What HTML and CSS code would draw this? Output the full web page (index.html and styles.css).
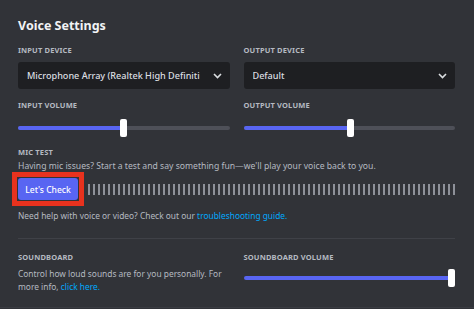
FILE: index.html
```html
<!DOCTYPE html>
<html lang="en">
<head>
    <meta charset="UTF-8">
    <meta name="viewport" content="width=device-width, initial-scale=1.0">
    <title>Voice Settings</title>
    <link rel="stylesheet" href="styles.css">
</head>
<body>
<div class="page">
    <h2 class="title">Voice Settings</h2>

    <div class="two-col devices">
        <div>
            <div class="label">Input Device</div>
            <div class="select">
                <span class="select-text">Microphone Array (Realtek High Definiti</span>
                <svg class="chev" width="9" height="6" viewBox="0 0 9 6"><path d="M1 1l3.5 3.5L8 1" fill="none" stroke="#dbdee1" stroke-width="1.6"/></svg>
            </div>
        </div>
        <div>
            <div class="label">Output Device</div>
            <div class="select">
                <span class="select-text">Default</span>
                <svg class="chev" width="9" height="6" viewBox="0 0 9 6"><path d="M1 1l3.5 3.5L8 1" fill="none" stroke="#dbdee1" stroke-width="1.6"/></svg>
            </div>
        </div>
    </div>

    <div class="two-col volumes">
        <div>
            <div class="label">Input Volume</div>
            <div class="slider">
                <div class="track"><div class="fill" style="width: 49.5%"></div></div>
                <div class="thumb" style="left: 49.5%"></div>
            </div>
        </div>
        <div>
            <div class="label">Output Volume</div>
            <div class="slider">
                <div class="track"><div class="fill" style="width: 50.2%"></div></div>
                <div class="thumb" style="left: 50.2%"></div>
            </div>
        </div>
    </div>

    <div class="mic-test">
        <div class="label">Mic Test</div>
        <p class="desc">Having mic issues? Start a test and say something fun—we'll play your voice back to you.</p>
        <div class="check-row">
            <span class="highlight"><button class="check-btn">Let's Check</button></span>
            <div class="meter"></div>
        </div>
        <p class="desc help">Need help with voice or video? Check out our <a href="#">troubleshooting guide.</a></p>
    </div>

    <div class="divider"></div>

    <div class="two-col soundboard">
        <div>
            <div class="label">Soundboard</div>
            <p class="desc sb-desc"><span>Control how loud sounds are for you personally. For</span><br><span>more info, </span><a href="#">click here.</a></p>
        </div>
        <div>
            <div class="label">Soundboard Volume</div>
            <div class="slider sb-slider">
                <div class="track"><div class="fill" style="width: 100%"></div></div>
                <div class="thumb end"></div>
            </div>
        </div>
    </div>

    <div class="bottom-line"></div>
</div>
</body>
</html>
```

FILE: styles.css
```css
body {
    margin: 0;
    background: #313338;
    font-family: "Noto Sans", "Open Sans", sans-serif;
    color: #b5bac1;
}

.page {
    padding: 17px 19px 0 18px;
}

.title {
    margin: 0;
    font-size: 12.5px;
    line-height: 17px;
    font-weight: bold;
    color: #f2f3f5;
}

.two-col {
    display: grid;
    grid-template-columns: 1fr 1fr;
    gap: 14px;
}

.label {
    font-size: 7.5px;
    line-height: 11px;
    font-weight: bold;
    text-transform: uppercase;
    letter-spacing: 0.02em;
    color: #b5bac1;
}

.devices { margin-top: 11px; }

.select {
    margin-top: 6px;
    height: 27px;
    background: #1e1f22;
    border-radius: 3px;
    display: flex;
    align-items: center;
    padding: 0 8px 0 9px;
    gap: 4px;
}

.select-text {
    flex: 1;
    font-size: 9.1px;
    font-weight: 500;
    color: #dbdee1;
    white-space: nowrap;
    overflow: hidden;
}

.volumes { margin-top: 11px; }

.slider {
    position: relative;
    margin-top: 8px;
    height: 18px;
    display: flex;
    align-items: center;
}

.track {
    width: 100%;
    height: 4px;
    border-radius: 2px;
    background: #4e5058;
    overflow: hidden;
}

.fill {
    height: 100%;
    background: #5865f2;
}

.thumb {
    position: absolute;
    top: 0;
    width: 7px;
    height: 18px;
    margin-left: -3px;
    background: #ffffff;
    border-radius: 2px;
}

.thumb.end {
    right: 0;
    margin-left: 0;
}

.mic-test {
    margin-top: 10px;
}

.desc {
    margin: 2px 0 0;
    font-size: 8.65px;
    line-height: 12px;
    color: #b5bac1;
}

.desc a {
    color: #00a8fc;
    text-decoration: none;
}

.check-row {
    margin-top: 6px;
    display: flex;
    align-items: center;
    gap: 2px;
}

/* red annotation box drawn over the button */
.highlight {
    display: flex;
    margin: -6px;
    padding: 1px;
    border: 5px solid #e8321e;
}

.check-btn {
    width: 60px;
    height: 22px;
    padding: 0;
    border: none;
    border-radius: 3px;
    background: #5865f2;
    color: #ffffff;
    font-family: inherit;
    font-size: 8.5px;
    font-weight: 500;
}

.meter {
    flex: 1;
    margin-left: 8px;
    height: 11px;
    background: repeating-linear-gradient(90deg, #8e9199 0 2px, transparent 2px 5px);
}

.help {
    margin-top: 10px;
    font-size: 8.4px;
}

.divider {
    margin-top: 16px;
    height: 1px;
    background: #3f4147;
}

.soundboard {
    margin-top: 13px;
}

.sb-desc {
    margin-top: 4px;
    font-size: 8.4px;
    line-height: 13px;
}

.sb-slider {
    margin-top: 6px;
    width: 211px;
}

.bottom-line {
    margin: 14px -19px 0 -18px;
    height: 1px;
    background: #3a3c42;
}
```
